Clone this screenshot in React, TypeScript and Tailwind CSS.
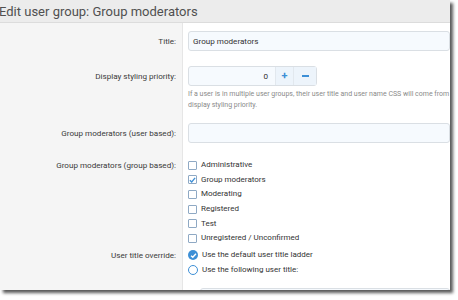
import React from 'react';

const font = { fontFamily: 'Roboto, "Open Sans", sans-serif' };

const Row: React.FC<{ label: string; children: React.ReactNode; labelClass?: string }> = ({ label, children, labelClass }) => (
  <div className="flex">
    <div className={`w-[183px] shrink-0 pr-[7px] text-right text-[8.1px] leading-[12px] text-[#3a3a3a] whitespace-nowrap ${labelClass ?? ''}`}>{label}</div>
    <div className="flex-1 pl-[5px]">{children}</div>
  </div>
);

const Checkbox: React.FC<{ checked?: boolean; label: string }> = ({ checked, label }) => (
  <div className="flex items-center h-[14.6px] gap-[4px]">
    <span className="w-[9px] h-[9px] border border-[#8fa9c4] rounded-[1px] bg-white flex items-center justify-center">
      {checked && (
        <svg width="8" height="8" viewBox="0 0 8 8">
          <path d="M1 4.2 L3.1 6.2 L7 1.6" fill="none" stroke="#3d8fd6" strokeWidth="1.5" />
        </svg>
      )}
    </span>
    <span className="text-[8px] text-[#333]">{label}</span>
  </div>
);

const Radio: React.FC<{ checked?: boolean; label: string }> = ({ checked, label }) => (
  <div className="flex items-center h-[15px] gap-[4px]">
    {checked ? (
      <span className="w-[10px] h-[10px] rounded-full bg-[#3d8fd6] flex items-center justify-center">
        <svg width="7" height="7" viewBox="0 0 8 8">
          <path d="M1.2 4.2 L3.2 6 L6.8 2" fill="none" stroke="#fff" strokeWidth="1.6" />
        </svg>
      </span>
    ) : (
      <span className="w-[10px] h-[10px] rounded-full border border-[#3d8fd6] bg-white" />
    )}
    <span className="text-[8px] text-[#333]">{label}</span>
  </div>
);

export default function App() {
  return (
    <div className="w-[458px] h-[300px] bg-white" style={font}>
      <div className="w-[450px] h-[290px] overflow-hidden bg-white shadow-[3px_3px_3px_rgba(0,0,0,0.65)]">
        <div className="h-[23px] bg-[#ececec] border-b border-[#dcdcdc] flex items-center">
          <h1 className="ml-[-1px] text-[13px] leading-none text-[#505050] whitespace-nowrap">Edit user group: Group moderators</h1>
        </div>
        <div className="relative">
          <div className="absolute left-0 top-0 w-[183px] h-[300px] bg-[#f5f5f5] border-r border-[#e6e6e6]" />
          <div className="relative pt-[8px]">
            <Row label="Title:" labelClass="pt-[4px]">
              <div className="h-[20px] border border-[#dadfe4] rounded-[3px] bg-[#f6fafe] pl-[4px] text-[8.1px] text-[#333] flex items-center">Group moderators</div>
            </Row>
            <div className="h-[15px]" />
            <Row label="Display styling priority:" labelClass="pt-[4px]">
              <div className="flex h-[20px] w-[129px] border border-[#dadfe4] rounded-[3px] bg-[#f6fafe]">
                <div className="flex-1 text-right pr-[7px] text-[8.1px] text-[#333] flex items-center justify-end">0</div>
                <div className="w-[18px] border-l border-[#e2e8ee] bg-[#edf4fb] flex items-center justify-center text-[#3d8fd6] font-bold text-[11px]">+</div>
                <div className="w-[23px] border-l border-[#e2e8ee] bg-[#edf4fb] flex items-center justify-center">
                  <span className="w-[7px] h-[2px] bg-[#3d8fd6]" />
                </div>
              </div>
              <div className="mt-[3px] text-[7px] leading-[10.5px] text-[#8a8a8a] whitespace-nowrap">
                If a user is in multiple user groups, their user title and user name CSS will come from
                <br />
                display styling priority.
              </div>
            </Row>
            <div className="h-[13px]" />
            <Row label="Group moderators (user based):" labelClass="pt-[4px]">
              <div className="h-[20px] border border-[#dadfe4] rounded-[3px] bg-[#f6fafe]" />
            </Row>
            <div className="h-[15px]" />
            <Row label="Group moderators (group based):" labelClass="pt-[1px]">
              <Checkbox label="Administrative" />
              <Checkbox checked label="Group moderators" />
              <Checkbox label="Moderating" />
              <Checkbox label="Registered" />
              <Checkbox label="Test" />
              <Checkbox label="Unregistered / Unconfirmed" />
            </Row>
            <div className="h-[2px]" />
            <Row label="User title override:" labelClass="pt-[1px]">
              <Radio checked label="Use the default user title ladder" />
              <Radio label="Use the following user title:" />
              <div className="ml-[12px] mt-[10px] h-[20px] border border-[#dadfe4] rounded-[3px] bg-[#f6fafe]" />
            </Row>
          </div>
        </div>
      </div>
    </div>
  );
}
